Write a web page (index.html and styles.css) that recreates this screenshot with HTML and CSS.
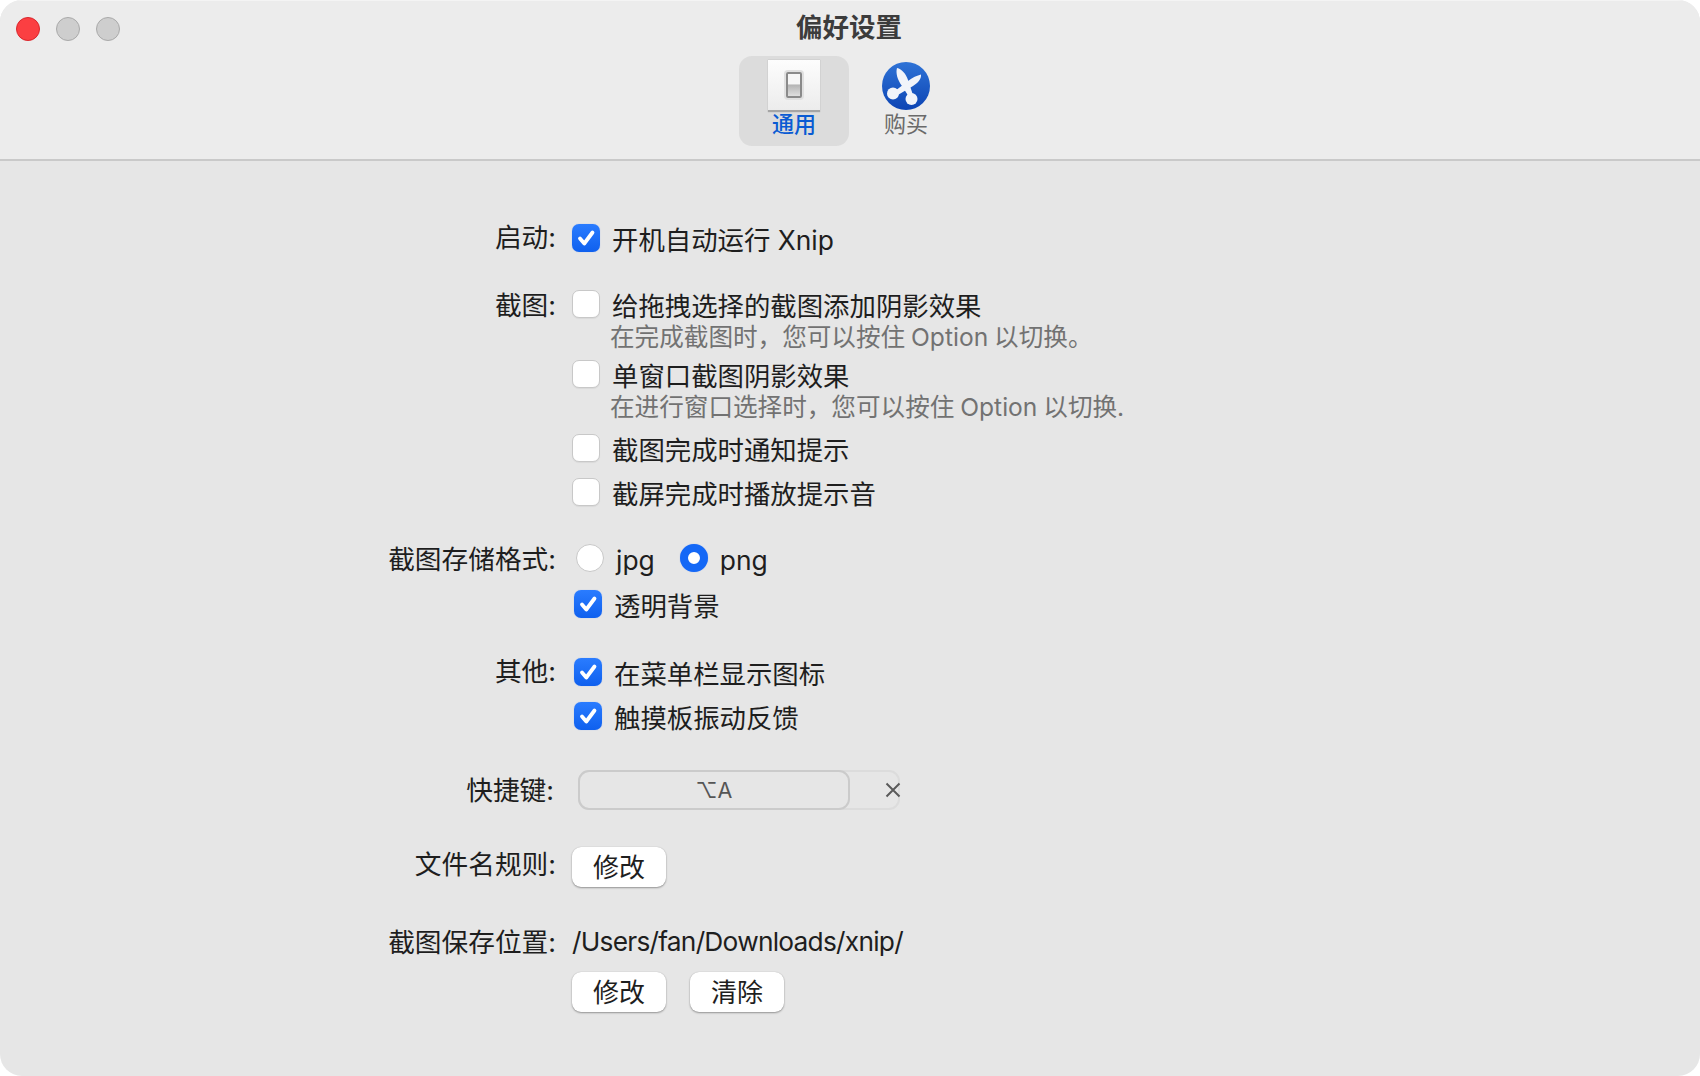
FILE: index.html
```html
<!DOCTYPE html>
<html lang="zh-CN">
<head>
<meta charset="utf-8">
<title>偏好设置</title>
<link rel="stylesheet" href="styles.css">
</head>
<body>
<div class="window">
  <header class="header">
    <div class="titlebar">
      <div class="lights"><span class="light red"></span><span class="light"></span><span class="light"></span></div>
      <div class="title">偏好设置</div>
    </div>
    <nav class="tabs">
      <div class="tab active">
        <div class="tile"><div class="switch"></div></div>
        <div class="tab-label">通用</div>
      </div>
      <div class="tab">
        <svg class="logo" viewBox="0 0 48 48" width="48" height="48">
          <defs><linearGradient id="lg" x1="0" y1="0" x2="0" y2="1"><stop offset="0" stop-color="#2f73d6"/><stop offset="1" stop-color="#0c44b4"/></linearGradient></defs>
          <circle cx="24" cy="24" r="24" fill="url(#lg)"/>
          <path d="M15 6 C20 7 24 12 26 18 L31 33 L27 35 L20 24 C15.500 18 13.500 11 15 6 Z" fill="#f1f4fa"/>
          <path d="M39 12.500 C39.500 17 36 21 31 24 L15 33.500 L13 29 L26 19 C30 15.500 35.500 13.500 39 12.500 Z" fill="#f1f4fa"/>
          <circle cx="11" cy="31.500" r="6" fill="#f1f4fa"/>
          <circle cx="29.500" cy="37" r="6" fill="#f1f4fa"/>
        </svg>
        <div class="tab-label">购买</div>
      </div>
    </nav>
  </header>
  <main class="form">
    <section class="row row-start">
      <div class="label">启动:</div>
      <div class="fields">
        <div class="opt"><span class="box on"><svg viewBox="0 0 28 28"><path d="M8 14.500 L12.300 19.500 L20.500 8.500"/></svg></span><span class="text">开机自动运行 Xnip</span></div>
      </div>
    </section>
    <section class="row row-shot">
      <div class="label">截图:</div>
      <div class="fields">
        <div class="opt"><span class="box"></span><span class="text">给拖拽选择的截图添加阴影效果</span></div>
        <div class="hint">在完成截图时，您可以按住 Option 以切换。</div>
        <div class="opt opt-after-hint"><span class="box"></span><span class="text">单窗口截图阴影效果</span></div>
        <div class="hint">在进行窗口选择时，您可以按住 Option 以切换.</div>
        <div class="opt opt-third"><span class="box"></span><span class="text">截图完成时通知提示</span></div>
        <div class="opt opt-fourth"><span class="box"></span><span class="text">截屏完成时播放提示音</span></div>
      </div>
    </section>
    <section class="row row-format">
      <div class="label">截图存储格式:</div>
      <div class="fields">
        <div class="radios">
          <div class="opt"><span class="radio"></span><span class="text">jpg</span></div>
          <div class="opt"><span class="radio on"></span><span class="text">png</span></div>
        </div>
        <div class="opt opt-inset opt-clear"><span class="box on"><svg viewBox="0 0 28 28"><path d="M8 14.500 L12.300 19.500 L20.500 8.500"/></svg></span><span class="text">透明背景</span></div>
      </div>
    </section>
    <section class="row row-other">
      <div class="label">其他:</div>
      <div class="fields">
        <div class="opt opt-inset"><span class="box on"><svg viewBox="0 0 28 28"><path d="M8 14.500 L12.300 19.500 L20.500 8.500"/></svg></span><span class="text">在菜单栏显示图标</span></div>
        <div class="opt opt-inset opt-fourth"><span class="box on"><svg viewBox="0 0 28 28"><path d="M8 14.500 L12.300 19.500 L20.500 8.500"/></svg></span><span class="text">触摸板振动反馈</span></div>
      </div>
    </section>
    <section class="row row-key">
      <div class="label label-key">快捷键:</div>
      <div class="fields">
        <div class="shortcut">
          <div class="shortcut-value">⌥A</div>
          <svg class="clear" viewBox="0 0 16 16" width="16" height="16"><path d="M1.500 1.500 L14.500 14.500 M14.500 1.500 L1.500 14.500"/></svg>
        </div>
      </div>
    </section>
    <section class="row row-name">
      <div class="label label-btn">文件名规则:</div>
      <div class="fields"><div class="buttons"><button class="btn">修改</button></div></div>
    </section>
    <section class="row row-path">
      <div class="label">截图保存位置:</div>
      <div class="fields">
        <div class="path">/Users/fan/Downloads/xnip/</div>
        <div class="buttons buttons-path"><button class="btn">修改</button><button class="btn">清除</button></div>
      </div>
    </section>
  </main>
</div>
</body>
</html>
```
FILE: styles.css
```css
* { box-sizing: border-box; }
html, body { margin: 0; height: 100%; background: #fff; }
body {
  font-family: "Inter", "Noto Sans CJK SC", "Liberation Sans", sans-serif;
  color: #1e1e1e;
}
.window {
  width: 1700px;
  height: 1076px;
  background: #e6e6e6;
  border-radius: 22px;
  overflow: hidden;
}
.header {
  height: 161px;
  background: #ececec;
  border-bottom: 2px solid #c9c9c9;
  border-top: 1px solid #f4f4f4;
}
.titlebar {
  height: 55px;
  display: grid;
  grid-template-columns: 1fr auto 1fr;
  align-items: center;
}
.lights { display: flex; gap: 16px; padding-left: 16px; padding-top: 1px; }
.light {
  width: 24px; height: 24px; border-radius: 50%;
  background: #cecece; border: 1px solid #a9a9a9;
}
.light.red { background: #fb3f42; border-color: #d9262c; }
.title { font-size: 26.500px; font-weight: 700; color: #3c3c3c; line-height: 32px; margin-top: -3px; margin-left: -2px; }
.tabs { display: flex; justify-content: center; gap: 2px; }
.tab {
  width: 110px; height: 90px;
  border-radius: 13px;
  display: flex; flex-direction: column; align-items: center;
  padding-top: 4px;
}
.tab.active { background: #dcdcdc; }
.tile {
  width: 52px; height: 52px;
  background: linear-gradient(#fdfdfd, #ececec);
  border-bottom: 2px solid #a5a5a5;
  box-shadow: 0 0 1px rgba(0,0,0,.25);
  display: flex; align-items: center; justify-content: center;
}
.switch {
  width: 16px; height: 26px;
  border: 2px solid #8a8a8a;
  border-radius: 2px;
  background: linear-gradient(#f6f6f6 45%, #b4b4b4 50%, #dedede);
  box-shadow: 0 0 0 2px #e0e0e0;
}
.logo { display: block; margin-top: 2px; }
.tab-label { font-size: 22px; line-height: 30px; color: #6a6a6a; }
.tab.active .tab-label { color: #0a5bd3; margin-top: -3px; font-weight: 500; }
.tab:not(.active) .tab-label { margin-top: -1px; }

.form { display: flex; flex-direction: column; }
.row { display: grid; grid-template-columns: 556px 1fr; column-gap: 16px; }
.row-start { margin-top: 63px; }
.row-shot { margin-top: 38px; }
.row-format { margin-top: 38px; }
.row-other { margin-top: 40px; }
.row-key { margin-top: 40px; }
.row-name { margin-top: 37px; }
.row-path { margin-top: 41px; }

.label { text-align: right; font-size: 26.700px; line-height: 28px; white-space: nowrap; }
.row-start .label, .row-other .label { margin-top: -1px; }
.row-shot .label, .row-format .label { margin-top: 1px; }
.label-key { line-height: 40px; padding-right: 2px; }
.label-btn { line-height: 34px; }
.fields { display: flex; flex-direction: column; align-items: flex-start; }
.opt { display: flex; align-items: center; height: 28px; }
.text { font-size: 26.400px; line-height: 32px; margin-left: 12px; margin-top: 3px; white-space: nowrap; }
.box {
  width: 28px; height: 28px; border-radius: 7px;
  background: #fff;
  border: 1px solid #c8c8c8;
  box-shadow: 0 1px 1px rgba(0,0,0,.06);
  flex: none;
}
.box.on {
  background: linear-gradient(#2a7cff, #0f60ee);
  border: none;
  box-shadow: 0 0 1px rgba(0,80,255,.4);
}
.box svg { display: block; width: 28px; height: 28px; }
.box path { fill: none; stroke: #fff; stroke-width: 3.800; stroke-linecap: round; stroke-linejoin: round; }
.hint { font-size: 24.600px; line-height: 28px; color: #727272; margin-top: 5px; margin-left: 38px; white-space: nowrap; word-spacing: -1px; }
.opt-after-hint { margin-top: 9px; }
.opt-third { margin-top: 13px; }
.opt-fourth { margin-top: 16px; }
.opt-clear { margin-top: 18px; }
.opt-inset { margin-left: 2px; }
.radios { display: flex; gap: 25px; margin-left: 4px; }
.radio {
  width: 28px; height: 28px; border-radius: 50%;
  background: #fff; border: 1px solid #c8c8c8; flex: none;
}
.radio.on {
  border: 8.500px solid #1468f6;
  box-shadow: 0 0 1px rgba(0,80,255,.4);
}
.shortcut {
  width: 322px; height: 40px; margin-left: 6px;
  border: 2px solid #dcdcdc; border-radius: 11px;
  display: flex; align-items: center; justify-content: space-between;
}
.shortcut-value {
  width: 272px; height: 40px; margin-left: -2px;
  border: 2px solid #cbcbcb; border-radius: 11px;
  display: flex; align-items: center; justify-content: center;
  font-size: 21.500px; color: #555;
}
.clear { margin-right: -3px; flex: none; }
.clear path { stroke: #5a5a5a; stroke-width: 2; fill: none; }
.buttons { display: flex; gap: 24px; }
.btn {
  width: 94px; height: 40px;
  background: #fff; border: none; border-radius: 9px;
  box-shadow: 0 1px 2px rgba(0,0,0,.35), 0 0 1px rgba(0,0,0,.2);
  font: inherit; font-size: 26px; color: #1e1e1e;
  padding: 0 0 6px;
}
.path { font-size: 26.300px; line-height: 28px; white-space: nowrap; letter-spacing: -.75px; }
.buttons-path { margin-top: 16px; }
```
